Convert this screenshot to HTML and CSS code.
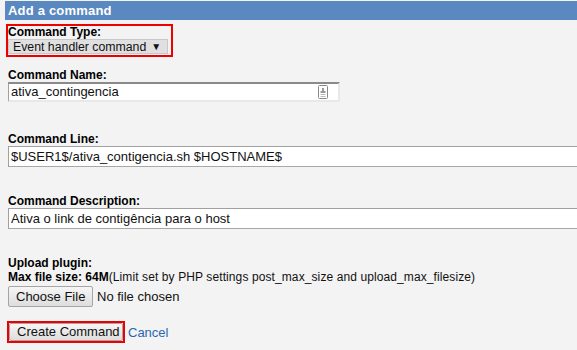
FILE: index.html
```html
<!DOCTYPE html>
<html lang="en">
<head>
<meta charset="UTF-8">
<title>Add a command</title>
<link rel="stylesheet" href="styles.css">
</head>
<body>

<div class="panel">
  <h2>Add a command</h2>

  <form class="form">
    <div class="highlight type-field">
      <label>Command Type:</label>
      <div class="select">Event handler command <span class="caret">&#9660;</span></div>
    </div>

    <div class="field name-field">
      <label>Command Name:</label>
      <div class="text-input short">
        <span>ativa_contingencia</span>
        <svg class="key" width="10" height="14" viewBox="0 0 10 14">
          <rect x="0.5" y="0.5" width="9" height="13" rx="1" fill="#fff" stroke="#888"/>
          <rect x="4" y="3" width="2" height="3" fill="#999"/>
          <rect x="2.5" y="6" width="5" height="2" fill="#999"/>
          <rect x="2.5" y="9" width="5" height="1" fill="#bbb"/>
          <rect x="2.5" y="11" width="5" height="1" fill="#bbb"/>
        </svg>
      </div>
    </div>

    <div class="field line-field">
      <label>Command Line:</label>
      <div class="text-input wide">$USER1$/ativa_contigencia.sh $HOSTNAME$</div>
    </div>

    <div class="field desc-field">
      <label>Command Description:</label>
      <div class="text-input wide">Ativa o link de contigência para o host</div>
    </div>

    <div class="upload">
      <label>Upload plugin:</label>
      <p class="limit"><b>Max file size: 64M</b>(Limit set by PHP settings post_max_size and upload_max_filesize)</p>
      <div class="file-row">
        <span class="btn file-btn">Choose File</span>
        <span class="no-file">No file chosen</span>
      </div>
    </div>

    <div class="actions">
      <span class="highlight submit"><span class="btn">Create Command</span></span>
      <a href="#" class="cancel">Cancel</a>
    </div>
  </form>
</div>

</body>
</html>
```

FILE: styles.css
```css
body {
  margin: 0;
  background-color: #f3f3f3;
  font-family: "Liberation Sans", Arial, sans-serif;
  font-size: 13px;
  color: #111;
  overflow: hidden;
}
.panel {
  margin-left: 5px;
  padding-top: 1px;
}
h2 {
  margin: 0;
  height: 19px;
  padding-left: 3px;
  background-color: #5a88c0;
  color: #fff;
  font-size: 13px;
  line-height: 19px;
  font-weight: bold;
  letter-spacing: 0.2px;
}
.form {
  padding-left: 3px;
}
label {
  display: block;
  font-weight: bold;
  font-size: 12px;
  line-height: 13px;
  color: #000;
}
.highlight {
  border: 2px solid #e00;
}
.type-field {
  width: fit-content;
  margin: 4px 0 12px -2px;
  padding: 0 3px 1px 0;
}
.select {
  display: flex;
  align-items: center;
  box-sizing: border-box;
  height: 15px;
  padding-left: 4px;
  padding-right: 6px;
  background-color: #e0e0e0;
  border: 1px solid #c8c8c8;
  font-size: 12.3px;
  color: #111;
  white-space: nowrap;
}
.caret {
  font-size: 10px;
  margin-left: 5px;
}
.name-field { margin-bottom: 31px; }
.line-field { margin-bottom: 28px; }
.desc-field { margin-bottom: 28px; }
.text-input {
  box-sizing: border-box;
  height: 21px;
  line-height: 19px;
  padding-left: 2px;
  background-color: #fff;
  border-top: 1px solid #a0a0a0;
  border-left: 1px solid #a0a0a0;
  border-bottom: 1px solid #a8a8a8;
  white-space: nowrap;
  font-size: 13px;
}
.short {
  width: 332px;
  height: 20px;
  line-height: 16px;
  display: flex;
  justify-content: space-between;
  align-items: center;
  border-top: 2px solid #8a8a8a;
  border-right: 2px solid #e8e8e8;
  border-bottom: 2px solid #e8e8e8;
  padding-right: 10px;
}
.wide { width: 600px; }
.limit {
  margin: 0 0 2px;
  font-size: 12px;
  line-height: 14px;
  letter-spacing: 0.1px;
  color: #111;
}
.limit b { color: #000; letter-spacing: 0; }
.file-row {
  display: flex;
  align-items: center;
  gap: 4px;
  margin-bottom: 14px;
}
.btn {
  display: inline-block;
  box-sizing: border-box;
  height: 21px;
  line-height: 19px;
  padding: 0 7px;
  background: linear-gradient(#f6f6f6, #dddddd);
  border: 1px solid #a5a5a5;
  border-radius: 2px;
  font-size: 13px;
  color: #111;
  white-space: nowrap;
}
.file-btn { width: 85px; text-align: center; }
.no-file { font-size: 13px; }
.actions {
  display: flex;
  align-items: center;
  gap: 3px;
}
.submit {
  display: flex;
  margin-left: -1px;
}
.submit .btn { width: 114px; height: 18px; line-height: 16px; text-align: center; }
.cancel {
  color: #2a67b0;
  text-decoration: none;
  font-size: 13px;
}
```
